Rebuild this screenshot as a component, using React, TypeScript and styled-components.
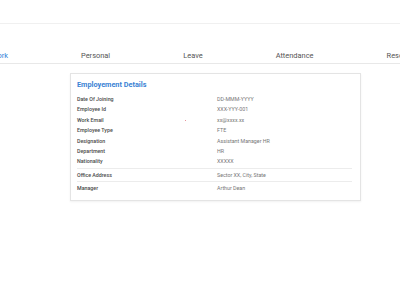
import { createGlobalStyle, styled } from "styled-components";

const GlobalStyle = createGlobalStyle`
  html, body {
    margin: 0;
    padding: 0;
    background: #ffffff;
    font-family: Roboto, "Liberation Sans", Arial, sans-serif;
  }
`;

const Page = styled.div`
  width: 400px;
  height: 284px;
  overflow: hidden;
`;

const TopBar = styled.header`
  height: 23px;
  border-bottom: 1px solid #f0f0f0;
`;

const TabStrip = styled.nav`
  height: 39px;
  border-bottom: 1px solid #e8e8e8;
  overflow: hidden;
  display: flex;
  align-items: flex-end;
`;

const TabList = styled.div`
  display: flex;
  gap: 73px;
  margin-left: -9px;
  padding-bottom: 2px;
  white-space: nowrap;
`;

const Tab = styled.span<{ $active?: boolean }>`
  font-size: 7.45px;
  line-height: 10px;
  color: ${(p) => (p.$active ? "#2f7fd8" : "#555555")};
`;

const Content = styled.main`
  padding: 9px 39px 0 70px;
`;

const Card = styled.section`
  border: 1px solid #e4e4e4;
  box-shadow: 0 1px 2px rgba(0, 0, 0, 0.06);
  padding: 6px 8px 6px 6px;
`;

const Title = styled.h2`
  margin: 0 0 4px;
  font-size: 7.3px;
  line-height: 10px;
  font-weight: 700;
  color: #3a82d4;
`;

const Rows = styled.div`
  display: grid;
  grid-template-columns: 140px 1fr;
`;

const Label = styled.div`
  font-size: 5.3px;
  line-height: 10.4px;
  font-weight: 500;
  color: #4a4a4a;
  position: relative;
`;

const Value = styled.div`
  font-size: 5.3px;
  line-height: 10.4px;
  color: #777777;
`;

const Divider = styled.div`
  grid-column: 1 / -1;
  height: 1px;
  background: #ececec;
  margin: 1px 0 1px;
`;

const Dot = styled.span`
  position: absolute;
  left: 108px;
  top: 5px;
  width: 1px;
  height: 1px;
  border-radius: 50%;
  background: #e0707a;
`;

const tabs = ["Work", "Personal", "Leave", "Attendance", "Resources"];

const details: [string, string][] = [
  ["Date Of Joining", "DD-MMM-YYYY"],
  ["Employee Id", "XXX-YYY-001"],
  ["Work Email", "xx@xxxx.xx"],
  ["Employee Type", "FTE"],
  ["Designation", "Assistant Manager HR"],
  ["Department", "HR"],
  ["Nationality", "XXXXX"],
];

function App() {
  return (
    <Page>
      <GlobalStyle />
      <TopBar />
      <TabStrip>
        <TabList>
          {tabs.map((t, i) => (
            <Tab key={t} $active={i === 0}>
              {t}
            </Tab>
          ))}
        </TabList>
      </TabStrip>
      <Content>
        <Card>
          <Title>Employement Details</Title>
          <Rows>
            {details.map(([label, value]) => (
              <>
                <Label key={label}>
                  {label}
                  {label === "Work Email" && <Dot />}
                </Label>
                <Value key={label + "-v"}>{value}</Value>
              </>
            ))}
            <Divider />
            <Label>Office Address</Label>
            <Value>Sector XX, City, State</Value>
            <Divider />
            <Label>Manager</Label>
            <Value>Arthur Dean</Value>
          </Rows>
        </Card>
      </Content>
    </Page>
  );
}

export default App;
